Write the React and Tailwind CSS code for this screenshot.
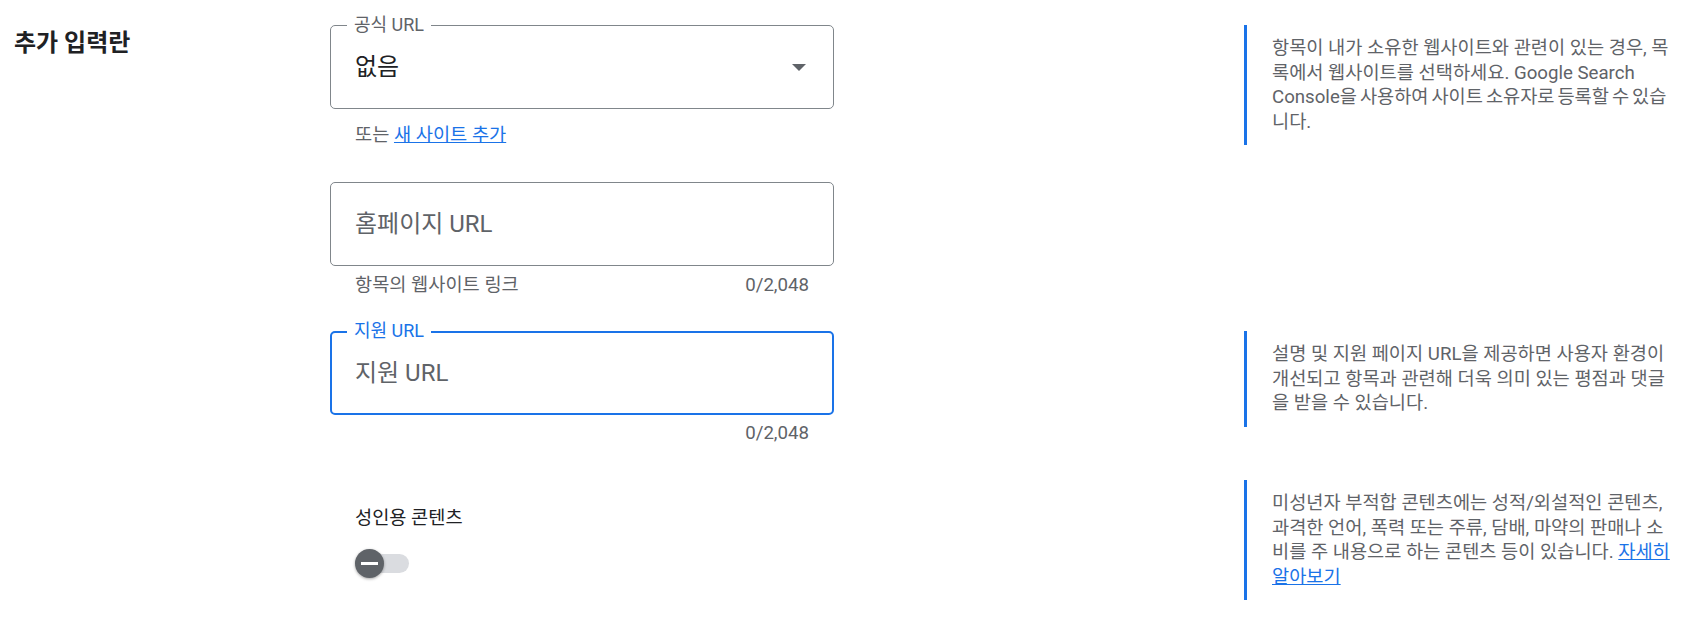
import React from "react";

const FONT = { fontFamily: 'Roboto, "Noto Sans CJK KR", sans-serif' };

function HelpBlock({ children }) {
  return (
    <div className="ml-auto w-[432px] shrink-0 border-l-[3px] border-[#1a73e8] py-[11px] pl-[25px] text-[18.67px] leading-[24.5px] text-[#5f6368]">
      {children}
    </div>
  );
}

export default function App() {
  return (
    <div className="min-h-[624px] w-full bg-white px-[14px] pt-[25px]" style={FONT}>
      {/* Row 1 */}
      <div className="flex items-start">
        <div className="w-[316px] shrink-0 pt-[3px]">
          <h2 className="text-[24px] font-bold leading-[30px] text-[#202124]">추가 입력란</h2>
        </div>
        <div className="w-[504px] shrink-0">
          <div className="relative flex h-[84px] items-center rounded-[5px] border border-[#80868b] pl-[24px] pr-[27px]">
            <span className="absolute -top-[11px] left-[16px] bg-white px-[7px] text-[18px] leading-[20px] text-[#5f6368]">
              공식 URL
            </span>
            <span className="flex-1 text-[24px] leading-[30px] text-[#202124]">없음</span>
            <svg width="14" height="7" viewBox="0 0 14 7" className="shrink-0">
              <polygon points="0,0 14,0 7,7" fill="#5f6368" />
            </svg>
          </div>
          <div className="mt-[14px] pl-[25px] text-[18.67px] leading-[24px] text-[#5f6368]">
            또는 <a href="#" className="text-[#1a73e8] underline">새 사이트 추가</a>
          </div>
        </div>
        <HelpBlock>
          항목이 내가 소유한 웹사이트와 관련이 있는 경우, 목록에서 웹사이트를 선택하세요. Google Search{" "}
          <span className="[word-spacing:-1.7px]">Console을 사용하여 사이트 소유자로 등록할 수 있습니다.</span>
        </HelpBlock>
      </div>

      {/* Row 2 */}
      <div className="mt-[35px] flex items-start">
        <div className="w-[316px] shrink-0" />
        <div className="w-[504px] shrink-0">
          <div className="flex h-[84px] items-center rounded-[5px] border border-[#80868b] pl-[24px]">
            <span className="text-[24px] leading-[30px] text-[#5f6368]">홈페이지 URL</span>
          </div>
          <div className="mt-[7px] flex justify-between px-[25px] text-[18.67px] leading-[24px] text-[#5f6368]">
            <span>항목의 웹사이트 링크</span>
            <span>0/2,048</span>
          </div>
        </div>
      </div>

      {/* Row 3 */}
      <div className="mt-[34px] flex items-start">
        <div className="w-[316px] shrink-0" />
        <div className="w-[504px] shrink-0">
          <div className="relative flex h-[84px] items-center rounded-[5px] border-2 border-[#1a73e8] pl-[23px]">
            <span className="absolute -top-[12px] left-[15px] bg-white px-[7px] text-[18px] leading-[20px] text-[#1a73e8]">
              지원 URL
            </span>
            <span className="text-[24px] leading-[30px] text-[#5f6368]">지원 URL</span>
          </div>
          <div className="mt-[6px] flex justify-end px-[25px] text-[18.67px] leading-[24px] text-[#5f6368]">
            <span>0/2,048</span>
          </div>
        </div>
        <HelpBlock>
          설명 및 지원 페이지 URL을 제공하면 사용자 환경이 개선되고 항목과 관련해 더욱 의미 있는 평점과 댓글을 받을 수 있습니다.
        </HelpBlock>
      </div>

      {/* Row 4 */}
      <div className="mt-[35px] flex items-start">
        <div className="w-[316px] shrink-0" />
        <div className="w-[504px] shrink-0 pl-[25px] pt-[26px]">
          <div className="text-[18.67px] leading-[24px] text-[#202124]">성인용 콘텐츠</div>
          <div className="relative mt-[19px] h-[29px] w-[54px]">
            <div className="absolute left-[6px] top-[5px] h-[19px] w-[48px] rounded-full bg-[#dadce0]" />
            <div className="absolute left-0 top-0 flex h-[29px] w-[29px] items-center justify-center rounded-full bg-[#5f6368] shadow-[0_1px_3px_rgba(0,0,0,0.35)]">
              <div className="h-[3px] w-[17px] bg-white" />
            </div>
          </div>
        </div>
        <HelpBlock>
          미성년자 부적합 콘텐츠에는 성적/외설적인 콘텐츠, 과격한 언어, 폭력 또는 주류, 담배, 마약의 판매나 소비를 주 내용으로 하는 콘텐츠 등이 있습니다.{" "}
          <a href="#" className="text-[#1a73e8] underline">자세히 알아보기</a>
        </HelpBlock>
      </div>
    </div>
  );
}
